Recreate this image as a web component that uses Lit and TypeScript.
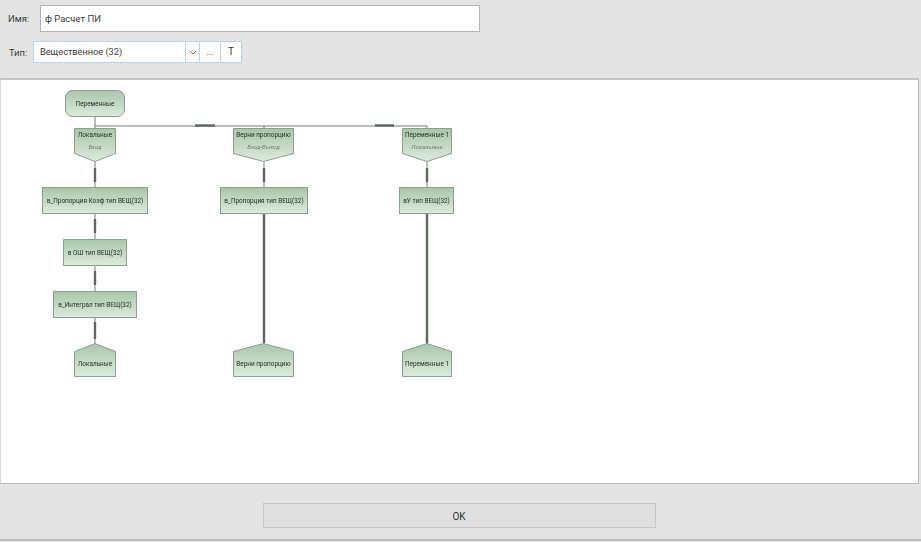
import { LitElement, html, svg, css } from "lit";
import { customElement } from "lit/decorators.js";

type Kind = "start" | "in" | "act" | "end";
interface DNode { kind: Kind; x: number; y: number; w: number; h: number; t: string; sub?: string; }

const nodes: DNode[] = [
  { kind: "start", x: 65.5, y: 90.5, w: 59, h: 26, t: "Переменные" },
  { kind: "in", x: 74.5, y: 128.5, w: 41, h: 33, t: "Локальные", sub: "Вход" },
  { kind: "in", x: 233.5, y: 128.5, w: 60, h: 33, t: "Верни пропорцию", sub: "Вход-Выход" },
  { kind: "in", x: 402.5, y: 128.5, w: 49, h: 33, t: "Переменные 1", sub: "Локальные" },
  { kind: "act", x: 42.5, y: 187.5, w: 105, h: 26, t: "в_Пропорция Коэф тип ВЕЩ(32)" },
  { kind: "act", x: 220.5, y: 187.5, w: 87, h: 26, t: "в_Пропорция тип ВЕЩ(32)" },
  { kind: "act", x: 399.5, y: 187.5, w: 54, h: 26, t: "вУ тип ВЕЩ(32)" },
  { kind: "act", x: 63.5, y: 239.5, w: 63, h: 26, t: "в ОШ тип ВЕЩ(32)" },
  { kind: "act", x: 53.5, y: 291.5, w: 83, h: 26, t: "в_Интеграл тип ВЕЩ(32)" },
  { kind: "end", x: 74.5, y: 343.5, w: 41, h: 33, t: "Локальные" },
  { kind: "end", x: 233.5, y: 343.5, w: 60, h: 33, t: "Верни пропорцию" },
  { kind: "end", x: 402.5, y: 343.5, w: 49, h: 33, t: "Переменные 1" },
];

// thin wires: [x1, y1, x2, y2]
const thin: number[][] = [
  [95, 117, 95, 128], [95, 126, 427, 126], [264, 126, 264, 128], [427, 126, 427, 128],
  [95, 162, 95, 187], [264, 162, 264, 187], [427, 162, 427, 187],
  [95, 214, 95, 239], [95, 266, 95, 291], [95, 318, 95, 343],
];
// thick skewers on the wires
const thick: number[][] = [
  [195, 125.5, 215, 125.5], [375, 125.5, 394, 125.5],
  [95, 168, 95, 182], [264, 168, 264, 182], [427, 168, 427, 182],
  [95, 219, 95, 233], [95, 271, 95, 285], [95, 322, 95, 339],
  [264, 214, 264, 343], [427, 214, 427, 343],
];

function shape(n: DNode) {
  const { x, y, w, h } = n;
  const r = x + w, b = y + h, cx = x + w / 2;
  if (n.kind === "start") return svg`<rect class="node" x=${x} y=${y} width=${w} height=${h} rx="7" />`;
  if (n.kind === "act") return svg`<rect class="node" x=${x} y=${y} width=${w} height=${h} />`;
  if (n.kind === "in") return svg`<polygon class="node" points="${x},${y} ${r},${y} ${r},${y + 25} ${cx},${b} ${x},${y + 25}" />`;
  return svg`<polygon class="node" points="${cx},${y} ${r},${y + 8} ${r},${b} ${x},${b} ${x},${y + 8}" />`;
}

function label(n: DNode) {
  const cx = n.x + n.w / 2;
  if (n.kind === "in") {
    return svg`<text class="lbl" x=${cx} y=${n.y + 8.5}>${n.t}</text>
      <text class="sub" x=${cx} y=${n.y + 20.5}>${n.sub}</text>`;
  }
  const y = n.kind === "end" ? n.y + 22.5 : n.y + n.h / 2 + 2.2;
  return svg`<text class="lbl" x=${cx} y=${y}>${n.t}</text>`;
}

@customElement("app-root")
export class AppRoot extends LitElement {
  static styles = css`
    :host {
      display: flex; flex-direction: column; width: 921px; height: 542px;
      background: #e4e4e4; box-sizing: border-box; overflow: hidden;
      font-family: Roboto, "Noto Sans", sans-serif; color: #3a3a3a;
    }
    .head { height: 78px; flex: none; box-sizing: border-box; padding: 5px 0 0 8px; display: flex; flex-direction: column; gap: 9px; }
    .row { display: flex; align-items: center; }
    .lab { font-size: 9.4px; }
    .name-lab { width: 32px; }
    .type-lab { width: 25px; padding-left: 1px; box-sizing: border-box; }
    .name {
      width: 440px; height: 27px; box-sizing: border-box; background: #fff;
      border: 1px solid #b3b3b3; padding-left: 4px; font-size: 9.5px; line-height: 25px;
    }
    .combo { display: flex; height: 22px; width: 209px; box-sizing: border-box; background: #fff; border: 1px solid #b5d5f3; font-size: 9.2px; }
    .val { flex: 1; padding-left: 6px; line-height: 20px; }
    .cell { border-left: 1px solid #b5d5f3; display: flex; align-items: center; justify-content: center; line-height: 20px; box-sizing: border-box; }
    .arrow { width: 14px; }
    .dots { width: 21px; }
    .t { width: 21px; font-size: 10px; }
    .canvas {
      height: 406px; width: 919px; flex: none; background: #fff; box-sizing: border-box;
      border: 1px solid #b9b9b9; border-top: 2px solid #c4c4c4; border-left-color: #d8d8d8;
    }
    svg.dia { display: block; overflow: visible; filter: blur(0.3px); }
    .node { fill: url(#g); stroke: #8b9f8c; stroke-width: 1; }
    .wire { stroke: #727c73; stroke-width: 1; }
    .fat { stroke: #606860; stroke-width: 2.4; }
    .lbl { font-family: Roboto, sans-serif; font-size: 6.4px; fill: #263027; text-anchor: middle; }
    .sub { font-family: Roboto, sans-serif; font-size: 6px; font-style: italic; fill: #75807a; text-anchor: middle; }
    .foot { flex: 1; display: flex; flex-direction: column; align-items: center; padding-top: 19px; box-sizing: border-box; border-bottom: 2px solid #bdbdbd; margin-bottom: 1px; }
    .ok {
      width: 393px; height: 25px; margin-left: -3px; padding-top: 1px; box-sizing: border-box; background: #e0e0e0; border: 1px solid #c6c6c6;
      display: flex; align-items: center; justify-content: center; font-size: 10px; color: #333;
    }
  `;

  render() {
    return html`
      <div class="head">
        <div class="row">
          <span class="lab name-lab">Имя:</span>
          <div class="name">ф Расчет ПИ</div>
        </div>
        <div class="row">
          <span class="lab type-lab">Тип:</span>
          <div class="combo">
            <div class="val">Вещественное (32)</div>
            <div class="cell arrow">
              <svg width="8" height="5" viewBox="0 0 8 5"><path d="M1 1l3 3 3-3" fill="none" stroke="#777" stroke-width="1"/></svg>
            </div>
            <div class="cell dots">...</div>
            <div class="cell t">T</div>
          </div>
        </div>
      </div>
      <div class="canvas">
        <svg class="dia" width="917" height="403" viewBox="1 80 917 403">
          <defs>
            <linearGradient id="g" x1="0" y1="0" x2="0" y2="1">
              <stop offset="0" stop-color="#a8c6a9" />
              <stop offset="1" stop-color="#dcebdd" />
            </linearGradient>
          </defs>
          ${thin.map((l) => svg`<line class="wire" x1=${l[0]} y1=${l[1]} x2=${l[2]} y2=${l[3]} />`)}
          ${thick.map((l) => svg`<line class="fat" x1=${l[0]} y1=${l[1]} x2=${l[2]} y2=${l[3]} />`)}
          ${nodes.map((n) => shape(n))}
          ${nodes.map((n) => label(n))}
        </svg>
      </div>
      <div class="foot"><div class="ok">OK</div></div>
    `;
  }
}
